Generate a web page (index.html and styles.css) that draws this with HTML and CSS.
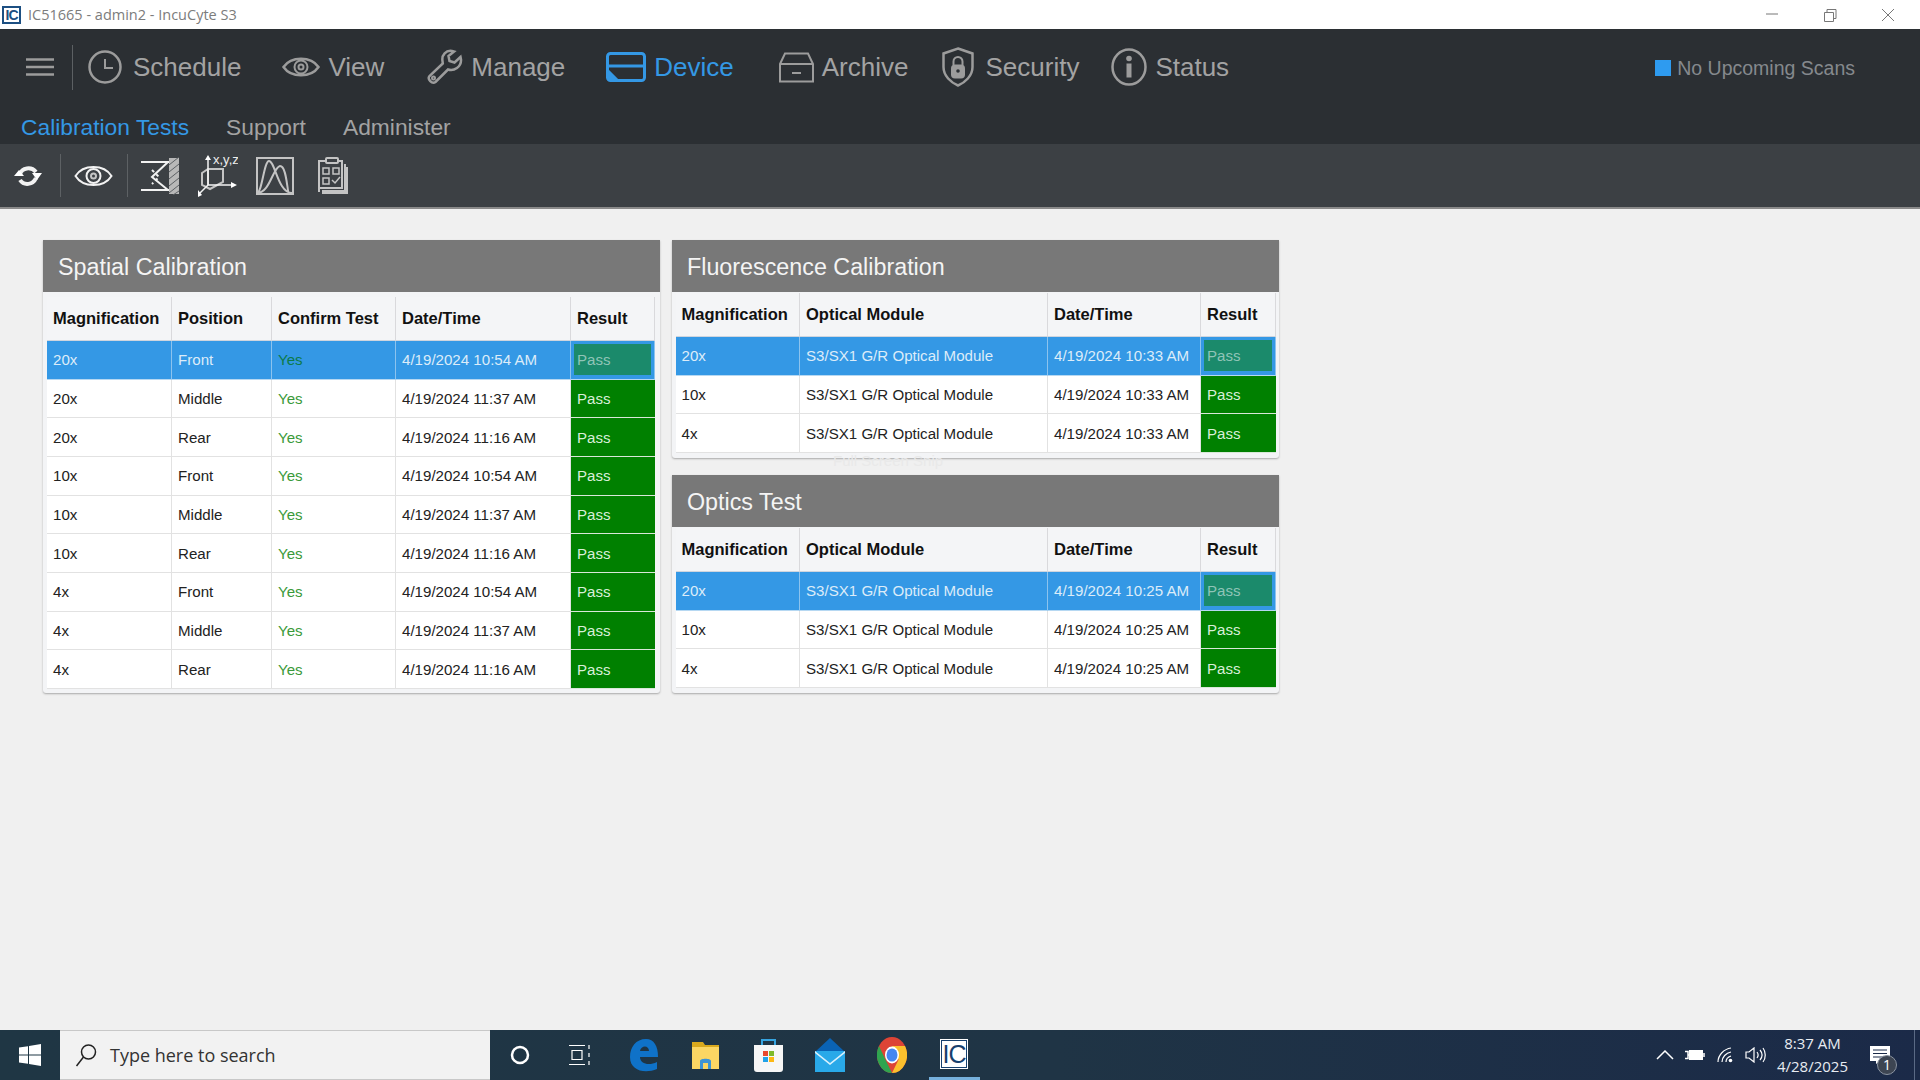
FILE: index.html
```html
<!DOCTYPE html>
<html lang="en">
<head>
<meta charset="utf-8">
<title>IC51665 - admin2 - IncuCyte S3</title>
<link rel="stylesheet" href="styles.css">
</head>
<body>
<header class="titlebar">
  <span class="app-logo">IC</span>
  <span class="title-text">IC51665 - admin2 - IncuCyte S3</span>
  <div class="win-controls">
    <svg width="14" height="14" viewBox="0 0 14 14"><path class="win-line" d="M1 6H13"/></svg>
    <svg width="14" height="14" viewBox="0 0 14 14"><path class="win-line" d="M1.5 4.5H10.5V13.5H1.5ZM4 4.5V1.5H13V10.5H10.5"/></svg>
    <svg width="14" height="14" viewBox="0 0 14 14"><path class="win-line" d="M1 1L13 13M13 1L1 13"/></svg>
  </div>
</header>

<nav class="nav">
  <div class="nav-top">
    <svg class="hamburger" width="28" height="18" viewBox="0 0 28 18"><path class="ni" d="M0 1.5H28M0 9H28M0 16.5H28"/></svg>
    <span class="nav-divider"></span>
    <a class="nav-item nav-schedule">
      <svg width="34" height="36" viewBox="0 0 34 36"><circle class="ni" cx="17" cy="18" r="15.5"/><path class="ni-thin" d="M17 10V19H25"/></svg>
      <span class="t-sched">Schedule</span>
    </a>
    <a class="nav-item nav-view">
      <svg width="38" height="26" viewBox="0 0 38 26"><path class="ni" d="M1.5 13C9 2 29 2 36.5 13C29 24 9 24 1.5 13Z"/><circle class="ni-thin" cx="19" cy="13" r="6.5"/><circle class="ni-thin" cx="19" cy="13" r="2.5"/></svg>
      <span>View</span>
    </a>
    <a class="nav-item nav-manage">
      <svg width="36" height="36" viewBox="0 0 36 36"><path class="ni" d="M25 2C19 1 14.500 6 15.500 12L15.800 14.500L2.500 27C0 30 5 35.500 8.500 33L21 20.500C27 22.500 34.500 18 34 10.500L33.500 8L27.500 13.500L22.500 12L21.500 7L27 2.500Z"/><circle class="ni-thin" cx="6.500" cy="29" r="1.500"/></svg>
      <span>Manage</span>
    </a>
    <a class="nav-item nav-device">
      <svg width="40" height="30" viewBox="0 0 40 30"><rect class="ni-blue" x="1.500" y="1.500" width="37" height="27" rx="3"/><path class="ni-blue" d="M1.500 14H38.500M2 19L11 28"/><path class="fill-blue" d="M2 18V28H11Z"/></svg>
      <span>Device</span>
    </a>
    <a class="nav-item nav-archive">
      <svg width="35" height="31" viewBox="0 0 35 31"><path class="ni-thin" d="M1 12L6 1.500H29L34 12ZM1 12V29.500H34V12M13 21H22"/></svg>
      <span>Archive</span>
    </a>
    <a class="nav-item nav-security">
      <svg width="32" height="40" viewBox="0 0 32 40"><path class="ni" d="M16 1.500L30.500 6.500V20C30.500 29 23 35.500 16 38.500C9 35.500 1.500 29 1.500 20V6.500Z"/><path class="ni-thin" d="M11.500 18V14.500A4.500 4.500 0 0 1 20.500 14.500V18"/><rect class="fill-gray" x="9" y="17.500" width="14" height="14" rx="4"/><circle class="fill-dark" cx="16" cy="24" r="1.800"/></svg>
      <span>Security</span>
    </a>
    <a class="nav-item nav-status">
      <svg width="36" height="38" viewBox="0 0 36 38"><ellipse class="ni" cx="18" cy="19" rx="16.500" ry="17.500"/><circle class="fill-gray" cx="18" cy="10.500" r="2.800"/><rect class="fill-gray" x="15.500" y="15.500" width="5" height="14"/></svg>
      <span>Status</span>
    </a>
    <div class="scan-status"><span class="scan-dot"></span>No Upcoming Scans</div>
  </div>
  <div class="nav-sub">
    <a class="sub-active">Calibration Tests</a>
    <a>Support</a>
    <a>Administer</a>
  </div>
</nav>

<div class="toolbar">
  <svg class="tb-refresh" width="30" height="24" viewBox="0 0 30 24"><path class="tw-thick" d="M7 10C9 4 18 2 23 8M23 14C20 21 11 22 7 16"/><path class="fill-white" d="M1 12H11L6 6ZM19 9H29L24 16Z"/></svg>
  <span class="tb-div"></span>
  <svg class="tb-eye" width="39" height="26" viewBox="0 0 39 26"><path class="tw" d="M1.500 13C9 1 30 1 37.500 13C30 25 9 25 1.500 13Z"/><circle class="tw" cx="19.500" cy="13" r="7"/><circle class="tw-soft" cx="19.500" cy="13" r="2.500"/></svg>
  <span class="tb-div"></span>
  <svg class="tb-cal" width="38" height="38" viewBox="0 0 38 38"><path class="tw" d="M0 5H28M0 33H28M27 5L11 20L27 33"/><path class="tw-dash" d="M11 13L18 20L11 27"/><rect class="fill-soft" x="28" y="1" width="10" height="36"/><path class="hatch" d="M28 8L38 0M28 15L38 7M28 22L38 14M28 29L38 21M28 36L38 28M32 38L38 34"/></svg>
  <svg class="tb-xyz" width="40" height="42" viewBox="0 0 40 42"><path class="tw-soft" d="M4 18L10 14H25V27L12 34L4 30ZM10 14V30"/><path class="tw-thin" d="M10 3V30M10 30H34M10 30L2 38"/><path class="fill-white" d="M7 5H13L10 0ZM33 27V33L39 30ZM0 35L4 40L0 42Z"/><text class="xyz-label" x="15" y="9">x,y,z</text></svg>
  <svg class="tb-chart" width="38" height="38" viewBox="0 0 38 38"><rect class="tw-soft" x="1" y="1" width="36" height="36"/><path class="tw-soft" d="M1 36C6 36 8 4 13 4C19 4 22 36 36 36M1 36C14 36 17 10 24 9C31 9 31 36 33 36"/></svg>
  <svg class="tb-clip" width="31" height="40" viewBox="0 0 31 40"><path class="tw-soft" d="M2 36V5H9M21 5H25V32H2M28 8V35H6V37H30V11"/><rect class="tw-soft" x="9" y="2" width="12" height="5" rx="1"/><path class="tw-thin-soft" d="M6 12H12V18H6ZM16 12H22V18H16ZM6 22H12V28H6ZM15 24L18 27L23 21"/></svg>
</div>

<main class="content">
  <section class="panel panel-left">
    <h2 class="panel-head">Spatial Calibration</h2>
    <div class="grid grid-spatial">
      <div class="th">Magnification</div><div class="th">Position</div><div class="th">Confirm Test</div><div class="th">Date/Time</div><div class="th">Result</div>
      <div class="td sel">20x</div><div class="td sel">Front</div><div class="td sel yes">Yes</div><div class="td sel">4/19/2024 10:54 AM</div><div class="td sel res"><span class="pass-sel">Pass</span></div>
      <div class="td">20x</div><div class="td">Middle</div><div class="td yes">Yes</div><div class="td">4/19/2024 11:37 AM</div><div class="td pass">Pass</div>
      <div class="td">20x</div><div class="td">Rear</div><div class="td yes">Yes</div><div class="td">4/19/2024 11:16 AM</div><div class="td pass">Pass</div>
      <div class="td">10x</div><div class="td">Front</div><div class="td yes">Yes</div><div class="td">4/19/2024 10:54 AM</div><div class="td pass">Pass</div>
      <div class="td">10x</div><div class="td">Middle</div><div class="td yes">Yes</div><div class="td">4/19/2024 11:37 AM</div><div class="td pass">Pass</div>
      <div class="td">10x</div><div class="td">Rear</div><div class="td yes">Yes</div><div class="td">4/19/2024 11:16 AM</div><div class="td pass">Pass</div>
      <div class="td">4x</div><div class="td">Front</div><div class="td yes">Yes</div><div class="td">4/19/2024 10:54 AM</div><div class="td pass">Pass</div>
      <div class="td">4x</div><div class="td">Middle</div><div class="td yes">Yes</div><div class="td">4/19/2024 11:37 AM</div><div class="td pass">Pass</div>
      <div class="td">4x</div><div class="td">Rear</div><div class="td yes">Yes</div><div class="td">4/19/2024 11:16 AM</div><div class="td pass">Pass</div>
    </div>
  </section>

  <div class="col-right">
    <section class="panel panel-right">
      <h2 class="panel-head">Fluorescence Calibration</h2>
      <div class="grid grid-optical">
        <div class="th">Magnification</div><div class="th">Optical Module</div><div class="th">Date/Time</div><div class="th">Result</div>
        <div class="td sel">20x</div><div class="td sel">S3/SX1 G/R Optical Module</div><div class="td sel">4/19/2024 10:33 AM</div><div class="td sel res"><span class="pass-sel">Pass</span></div>
        <div class="td">10x</div><div class="td">S3/SX1 G/R Optical Module</div><div class="td">4/19/2024 10:33 AM</div><div class="td pass">Pass</div>
        <div class="td">4x</div><div class="td">S3/SX1 G/R Optical Module</div><div class="td">4/19/2024 10:33 AM</div><div class="td pass">Pass</div>
      </div>
      <span class="ghost">Full Screen Snip</span>
    </section>
    <section class="panel panel-right">
      <h2 class="panel-head">Optics Test</h2>
      <div class="grid grid-optical">
        <div class="th">Magnification</div><div class="th">Optical Module</div><div class="th">Date/Time</div><div class="th">Result</div>
        <div class="td sel">20x</div><div class="td sel">S3/SX1 G/R Optical Module</div><div class="td sel">4/19/2024 10:25 AM</div><div class="td sel res"><span class="pass-sel">Pass</span></div>
        <div class="td">10x</div><div class="td">S3/SX1 G/R Optical Module</div><div class="td">4/19/2024 10:25 AM</div><div class="td pass">Pass</div>
        <div class="td">4x</div><div class="td">S3/SX1 G/R Optical Module</div><div class="td">4/19/2024 10:25 AM</div><div class="td pass">Pass</div>
      </div>
    </section>
  </div>
</main>

<footer class="taskbar">
  <div class="start">
    <svg width="22" height="22" viewBox="0 0 22 22"><path class="fill-white" d="M0 3.500L9 2.200V10.500H0ZM10 2L22 0V10.500H10ZM0 11.500H9V19.800L0 18.500ZM10 11.500H22V22L10 20Z"/></svg>
  </div>
  <div class="search">
    <svg width="22" height="24" viewBox="0 0 22 24"><circle class="search-ic" cx="13.500" cy="9" r="7"/><path class="search-ic" d="M8.500 14L1.500 23"/></svg>
    <span>Type here to search</span>
  </div>
  <div class="tb-slot slot-cortana"><svg width="20" height="20" viewBox="0 0 20 20"><circle class="cortana" cx="10" cy="10" r="8"/></svg></div>
  <div class="tb-slot slot-tv"><svg width="22" height="22" viewBox="0 0 22 22"><path class="tv" d="M0 1.500H16M3 6.500H13V15.500H3ZM0 20.500H16M20 1V5M20 9V13M20 17V21"/></svg></div>
  <div class="tb-slot"><svg width="30" height="34" viewBox="0 0 30 34"><path class="edge" d="M1 19C1 9 7 1 17 1C25 1 29 8 29 19H11C11 26 20 28 28 24V31C16 36 1 33 1 19ZM11 13H20C20 7 12 7 11 13Z"/></svg></div>
  <div class="tb-slot"><svg width="28" height="30" viewBox="0 0 28 30"><path class="folder-back" d="M0 2H11L13 5H27V12H0Z"/><rect class="folder" x="0" y="7" width="27" height="22"/><path class="folder-blue" d="M8 29V21C8 18 19 18 19 21V29H16V23H11V29Z"/></svg></div>
  <div class="tb-slot"><svg width="29" height="36" viewBox="0 0 29 36"><path class="bag-handle" d="M8 9V3H21V9"/><path class="bag" d="M0 8H29V32Q29 35 26 35H3Q0 35 0 32Z"/><rect class="q1" x="9" y="14" width="5" height="5"/><rect class="q2" x="15" y="14" width="5" height="5"/><rect class="q3" x="9" y="20" width="5" height="5"/><rect class="q4" x="15" y="20" width="5" height="5"/></svg></div>
  <div class="tb-slot"><svg width="30" height="34" viewBox="0 0 30 34"><path class="m-top" d="M15 0L30 14V16H0V14Z"/><rect class="m-body" x="0" y="13" width="30" height="21"/><path class="m-flap" d="M0 13L15 25L30 13V15L15 27L0 15Z"/></svg></div>
  <div class="tb-slot"><svg width="30" height="36" viewBox="0 0 30 30" preserveAspectRatio="none"><circle class="c-r" cx="15" cy="15" r="15"/><path class="c-g" d="M15 30A15 15 0 0 1 2 7.500L8.500 19Z"/><path class="c-y" d="M15 30A15 15 0 0 0 28 7.500H15L21.500 19Z"/><circle class="c-w" cx="15" cy="15" r="7"/><circle class="c-b" cx="15" cy="15" r="5.500"/></svg></div>
  <div class="tb-slot tb-current"><span class="ic-box">IC</span></div>

  <div class="tray">
    <div class="tray-slot"><svg width="18" height="10" viewBox="0 0 18 10"><path class="tr" d="M1 9L9 1L17 9"/></svg></div>
    <div class="tray-slot"><svg width="20" height="14" viewBox="0 0 20 14"><path class="fill-white" d="M4 2H18V12H4Z"/><path class="tr" d="M0 3.500H3V10.500H0M3 7H4M19 5V9"/></svg></div>
    <div class="tray-slot"><svg width="16" height="16" viewBox="0 0 16 16"><path class="tr-thin" d="M1 15C1 8 7 2 14 1M5 15C5 10 9 6 14 5M9 15C9 12 11 10 14 9"/><circle class="fill-white" cx="13.500" cy="13.500" r="1.800"/></svg></div>
    <div class="tray-slot"><svg width="21" height="16" viewBox="0 0 21 16"><path class="tr-thin" d="M1 5H4L9 1V15L4 11H1ZM12 5C13.500 7 13.500 9 12 11M15 3C17.500 6 17.500 10 15 13M18 1C21 5 21 11 18 15"/></svg></div>
    <div class="clock"><div>8:37 AM</div><div>4/28/2025</div></div>
    <div class="notif">
      <svg width="20" height="18" viewBox="0 0 20 18"><path class="fill-white" d="M0 0H20V15H10L6 18V15H0Z"/><path class="notif-line" d="M3 4H17M3 7.500H17M3 11H17"/></svg>
      <span class="badge">1</span>
    </div>
  </div>
</footer>
</body>
</html>
```
FILE: styles.css
```css
* { box-sizing: border-box; }
html, body { margin: 0; height: 100%; }
body {
  width: 1920px; height: 1080px; overflow: hidden;
  display: flex; flex-direction: column;
  background: #f0f0f0;
  font-family: "Liberation Sans", Arial, sans-serif;
}
a { display: block; }

/* title bar */
.titlebar {
  height: 29px; flex: none; background: #fff;
  display: flex; align-items: center; padding-left: 2px;
}
.app-logo {
  width: 19px; height: 18px; border: 2px solid #1c4f82;
  color: #1c4f82; font: bold 14px/14px "Liberation Sans", sans-serif;
  text-align: center; letter-spacing: -1px;
}
.title-text {
  margin-left: 7px; color: #7c7c7c;
  font: 14.500px "Open Sans", sans-serif;
}
.win-controls { margin-left: auto; display: flex; gap: 44px; padding-right: 25px; }
.win-line { fill: none; stroke: #777; stroke-width: 1; }

/* nav */
.nav { height: 115px; flex: none; background: #2b2f33; color: #a3a3a3; }
.nav-top { height: 76px; display: flex; align-items: center; padding-left: 26px; font-size: 26px; }
.hamburger { flex: none; }
.nav-divider { width: 1px; height: 45px; background: #5c6063; margin: 0 15px 0 18px; }
.nav-item { display: flex; align-items: center; gap: 8px; }
.t-sched { margin-left: 3px; }
.nav-view { margin-left: 41px; }
.nav-manage { margin-left: 43px; }
.nav-device { margin-left: 41px; color: #3498e5; }
.nav-archive { margin-left: 45px; }
.nav-security { margin-left: 34px; gap: 11px; }
.nav-status { margin-left: 32px; }
.ni, .ni-thin { fill: none; stroke: #9c9c9c; stroke-width: 2.5; }
.ni-thin { stroke-width: 2; }
.ni-blue { fill: none; stroke: #3498e5; stroke-width: 3; }
.fill-blue { fill: #3498e5; }
.fill-gray { fill: #9c9c9c; }
.fill-dark { fill: #2b2f33; }
.fill-white { fill: #fff; }
.fill-soft { fill: #b8b8b8; }
.scan-status {
  margin-left: auto; margin-right: 65px; margin-top: 2px; display: flex; align-items: center; gap: 6px;
  font-size: 19.500px; color: #85898d;
}
.scan-dot { width: 16px; height: 16px; background: #2e9bf0; }
.nav-sub { height: 39px; display: flex; align-items: center; gap: 37px; padding: 5px 0 0 21px; font-size: 22.800px; }
.sub-active { color: #3498e5; }

/* toolbar */
.toolbar {
  height: 65px; flex: none; background: #3c4044;
  border-bottom: 2px solid #8a8a8a;
  display: flex; align-items: center; padding-left: 13px;
}
.tb-div { width: 1px; height: 43px; background: #5d6164; }
.tb-refresh { margin-right: 17px; }
.tb-eye { margin: 0 14px 0 13px; }
.tb-cal { margin-left: 13px; }
.tb-xyz { margin-left: 19px; }
.tb-chart { margin-left: 18px; }
.tb-clip { margin-left: 23px; }
.tw, .tw-soft, .tw-thin, .tw-thick, .tw-dash, .tw-thin-soft { fill: none; stroke: #f2f2f2; stroke-width: 2; }
.tw-soft { stroke: #c4c4c4; }
.tw-thin { stroke-width: 1.500; }
.tw-thick { stroke-width: 4; }
.tw-dash { stroke-dasharray: 3 3; }
.tw-thin-soft { stroke: #c4c4c4; stroke-width: 1.500; }
.hatch { stroke: #5d6164; stroke-width: 1; }
.xyz-label { fill: #eee; font: 13px "Liberation Sans", sans-serif; }

/* content */
.content {
  flex: 1; min-height: 0; background: #f0f0f0;
  display: flex; align-items: flex-start; gap: 12px;
  padding: 31px 0 0 43px;
}
.col-right { width: 607px; display: flex; flex-direction: column; gap: 17px; }
.panel {
  position: relative; background: #f3f4f6;
  border-radius: 0 0 3px 3px;
  box-shadow: 0 1px 2px #a8a8a8;
}
.panel-left { width: 617px; padding-bottom: 4px; }
.panel-right { padding-bottom: 5px; }
.panel-head {
  margin: 0; height: 52px; background: #787878; color: #f4f4f4;
  font-weight: 400; font-size: 23.300px; line-height: 54px; padding-left: 15px;
}
.grid { display: grid; font-size: 15.100px; color: #222; }
.grid-spatial {
  grid-template-columns: 125px 100px 124px 175px 84px;
  grid-template-rows: 44px; grid-auto-rows: 38.670px;
  margin: 5px 4px 0;
}
.grid-optical {
  grid-template-columns: 124.500px 248px 153px 75px;
  grid-template-rows: 44px; grid-auto-rows: 38.670px;
  margin: 1px 3px 0 3.500px;
}
.th, .td { display: flex; align-items: center; padding-left: 6px; white-space: nowrap; }
.th {
  background: #f4f5f7; color: #111; font-weight: 700; font-size: 16.500px;
  border-right: 1px solid #d9d9dc; border-bottom: 1px solid #cfd5de;
}
.td { background: #fff; border-right: 1px solid #e2e2e2; border-bottom: 1px solid #e2e2e2; }
.yes { color: #3a9a3a; }
.sel { background: #3498e5; color: #dcecf9; border-right-color: #8cc3ee; border-bottom-color: #b6d8f2; }
.sel.yes { color: #0d7a4a; }
.res { padding: 3px 3px 4px; }
.pass-sel {
  flex: 1; align-self: stretch; display: flex; align-items: center; padding-left: 3px;
  background: #1b8a6b; color: #8fc4b7;
}
.pass { background: #008000; color: #d8efd8; border-right: none; border-bottom-color: #d8e8d8; }
.ghost {
  position: absolute; left: 161px; top: 212px;
  font-size: 15px; color: #e9e9e9;
}

/* taskbar */
.taskbar {
  height: 50px; flex: none; display: flex; align-items: center;
  background: linear-gradient(90deg, #1f3644 0%, #1f3445 55%, #1b2a48 100%);
  position: relative;
}
.start { width: 60px; height: 50px; display: flex; align-items: center; justify-content: center; }
.search {
  width: 430px; height: 50px; background: #f2f2f2;
  border-top: 1px solid #c8c8c8; border-bottom: 1px solid #c8c8c8;
  display: flex; align-items: center; gap: 13px; padding-left: 15px;
  font: 18px "Open Sans", sans-serif; color: #333;
}
.search-ic { fill: none; stroke: #222; stroke-width: 1.500; }
.tb-slot { width: 62px; height: 50px; display: flex; align-items: center; justify-content: center; position: relative; }
.slot-cortana { width: 60px; }
.slot-tv { width: 63px; padding-right: 4px; }
.tb-current::after {
  content: ""; position: absolute; left: 6px; right: 5px; bottom: 0; height: 3px; background: #76b0dc;
}
.cortana { fill: none; stroke: #fff; stroke-width: 2.500; }
.tv { fill: none; stroke: #fff; stroke-width: 1.200; }
.edge { fill: #0f72c8; fill-rule: evenodd; }
.folder-back { fill: #d9a91e; }
.folder { fill: #fbd663; }
.folder-blue { fill: #3d94d6; }
.bag-handle { fill: none; stroke: #36a4e0; stroke-width: 2; }
.bag { fill: #f6f6f6; }
.q1 { fill: #e8482c; } .q2 { fill: #7fba2a; } .q3 { fill: #21a2e8; } .q4 { fill: #fdb813; }
.m-top { fill: #0a63b5; }
.m-body { fill: #29a9e9; }
.m-flap { fill: #d9f1fc; }
.c-r { fill: #dd4436; } .c-g { fill: #2fa44f; } .c-y { fill: #fbc02d; }
.c-w { fill: #fff; } .c-b { fill: #4586f2; }
.ic-box {
  width: 28px; height: 30px; margin-bottom: 2px; background: #fff;
  color: #16406e; font: 25px/30px "Liberation Sans", sans-serif; text-align: center;
  letter-spacing: -1px; box-shadow: inset 0 0 0 1px #fff, inset 0 0 0 2px #16406e;
}
.tray { margin-left: auto; display: flex; align-items: center; height: 50px; color: #fff; }
.tray-slot { width: 30px; display: flex; justify-content: center; align-items: center; }
.tr { fill: none; stroke: #fff; stroke-width: 1.500; }
.tr-thin { fill: none; stroke: #fff; stroke-width: 1.200; }
.clock { width: 85px; text-align: center; font: 15px/23px "Open Sans", sans-serif; color: #e8ecf2; }
.notif { width: 60px; height: 50px; position: relative; display: flex; align-items: center; padding-left: 15px; border-right: 1px solid #5a6a85; margin-right: 5px; }
.notif-line { stroke: #1b2a48; stroke-width: 1.200; }
.badge {
  position: absolute; left: 22px; top: 25px; width: 20px; height: 20px; border-radius: 50%;
  background: #3d4552; border: 1px solid #8a93a0; color: #fff;
  font: 14px/18px "Open Sans", sans-serif; text-align: center;
}
```
